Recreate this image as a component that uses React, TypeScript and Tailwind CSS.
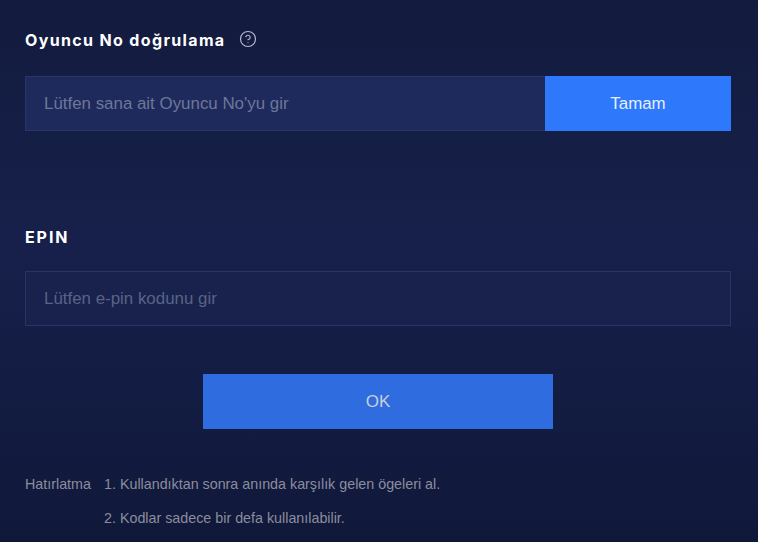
import { CircleHelp } from "lucide-react";

const sans = "font-['Liberation_Sans',Arial,sans-serif]";

export default function App() {
  return (
    <div className={`w-[758px] h-[542px] overflow-hidden pl-[25px] pr-[27px] pt-[30px] bg-[linear-gradient(180deg,#131b3e_0%,#16204a_45%,#10183a_100%)] ${sans}`}>
      <div className="flex items-center h-[20px]">
        <h2 className="font-['Inter',sans-serif] font-bold text-[16px] tracking-[1.35px] text-white leading-[20px]">Oyuncu No doğrulama</h2>
        <CircleHelp className="ml-[13px] -mt-[2px] w-[18px] h-[18px] text-[#b4b9cb]" strokeWidth={1.6} />
      </div>
      <div className="flex mt-[26px] h-[55px]">
        <div className="flex-1 flex items-center pl-[18px] bg-[#1e2a5c] border border-[#2b3666] border-r-0 text-[16.9px] text-[#6f7699]">
          Lütfen sana ait Oyuncu No'yu gir
        </div>
        <button className="w-[186px] bg-[#2e78fb] text-[#e4efff] text-[16.9px] font-medium">Tamam</button>
      </div>
      <h2 className="mt-[96px] font-['Inter',sans-serif] font-bold text-[16px] tracking-[1.9px] text-white leading-[20px]">EPIN</h2>
      <div className="mt-[24px] h-[55px] flex items-center pl-[18px] bg-[#18224d] border border-[#2a3462] text-[16.9px] text-[#5a6285]">
        Lütfen e-pin kodunu gir
      </div>
      <div className="flex justify-center mt-[48px]">
        <button className="w-[350px] h-[55px] bg-[#2f6ce0] text-[#c8d0de] text-[17px]">OK</button>
      </div>
      <div className="flex mt-[46px] text-[14.3px] leading-[18px] text-[#8b8d9e]">
        <span className="w-[79px]">Hatırlatma</span>
        <div className="flex flex-col gap-[16px]">
          <span>1. Kullandıktan sonra anında karşılık gelen ögeleri al.</span>
          <span>2. Kodlar sadece bir defa kullanılabilir.</span>
        </div>
      </div>
    </div>
  );
}
